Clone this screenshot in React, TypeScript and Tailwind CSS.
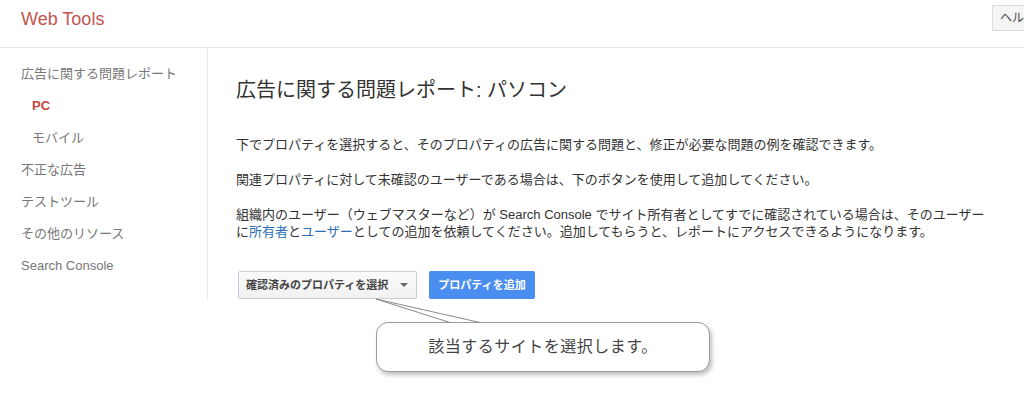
const font = { fontFamily: '"Liberation Sans", Arial, "Noto Sans CJK JP", sans-serif' };

const navItems = [
  { label: '広告に関する問題レポート', sub: false, active: false },
  { label: 'PC', sub: true, active: true },
  { label: 'モバイル', sub: true, active: false },
  { label: '不正な広告', sub: false, active: false },
  { label: 'テストツール', sub: false, active: false },
  { label: 'その他のリソース', sub: false, active: false },
  { label: 'Search Console', sub: false, active: false },
];

export default function App() {
  return (
    <div className="w-[1024px] h-[394px] overflow-hidden bg-white" style={font}>
      {/* Header */}
      <header className="h-[48px] flex items-start border-b border-[#ebebeb]">
        <div className="pl-[21px] pt-[8px] text-[18px] leading-[22px] text-[#c4554f]">Web Tools</div>
        <div className="ml-auto mr-[-28px] mt-[5px] h-[26px] w-[60px] shrink-0 border border-[#dcdcdc] bg-[#f5f5f5] pl-[7px] text-[12px] leading-[24px] text-[#444] whitespace-nowrap">
          ヘルプ
        </div>
      </header>

      <div className="flex items-start">
        {/* Sidebar */}
        <nav className="w-[208px] border-r border-[#ebebeb] pt-[10px] pb-[18px] shrink-0">
          {navItems.map((item) => (
            <div
              key={item.label}
              className={
                'h-[32px] flex items-center text-[13px] ' +
                (item.sub ? 'pl-[32px] ' : 'pl-[21px] ') +
                (item.active ? 'font-bold text-[#c6463b]' : 'text-[#777]')
              }
            >
              {item.label}
            </div>
          ))}
        </nav>

        {/* Main */}
        <main className="pl-[28px] pt-[28px] text-[#333]">
          <h1 className="text-[20px] leading-[28px] text-[#333] font-normal">
            広告に関する問題レポート: パソコン
          </h1>
          <p className="mt-[32px] text-[13px] leading-[17px]">
            下でプロパティを選択すると、そのプロパティの広告に関する問題と、修正が必要な問題の例を確認できます。
          </p>
          <p className="mt-[18px] text-[13px] leading-[17px]">
            関連プロパティに対して未確認のユーザーである場合は、下のボタンを使用して追加してください。
          </p>
          <p className="mt-[18px] text-[13px] leading-[17px] whitespace-nowrap">
            組織内のユーザー（ウェブマスターなど）が Search Console でサイト所有者としてすでに確認されている場合は、そのユーザー
            <br />
            に<span className="text-[#2a6db5]">所有者</span>と<span className="text-[#2a6db5]">ユーザー</span>
            としての追加を依頼してください。追加してもらうと、レポートにアクセスできるようになります。
          </p>

          <div className="relative mt-[31px]">
            <div className="flex items-center gap-[12px] pl-[2px]">
              <div className="h-[28px] w-[179px] flex items-center justify-between rounded-[2px] border border-[#c5cdd8] bg-gradient-to-b from-[#fafafa] to-[#f1f1f1] pl-[7px] pr-[8px] text-[11px] font-bold text-[#444]">
                <span>確認済みのプロパティを選択</span>
                <span className="h-0 w-0 border-l-[4px] border-r-[4px] border-t-[4px] border-l-transparent border-r-transparent border-t-[#666]" />
              </div>
              <div className="h-[28px] w-[106px] flex items-center justify-center rounded-[2px] bg-[#4a8ef0] text-[11px] font-bold text-white">
                プロパティを追加
              </div>
            </div>

            {/* Callout */}
            <div className="relative ml-[140px] mt-[23px] h-[50px] w-[334px] rounded-[12px] border border-[#9a9a9a] bg-white shadow-[2px_3px_4px_rgba(0,0,0,0.25)] flex items-center justify-center">
              <span className="text-[16px] text-[#444] tracking-[0.5px]">該当するサイトを選択します。</span>
            </div>
            <svg className="absolute left-[138px] top-[27px]" width="110" height="26" viewBox="0 0 110 26">
              <polygon points="2,1 76,24 106,24" fill="white" />
              <polyline points="76,24.5 2,1 106,24.5" fill="none" stroke="#8a8a8a" strokeWidth="1" />
            </svg>
          </div>
        </main>
      </div>
    </div>
  );
}
